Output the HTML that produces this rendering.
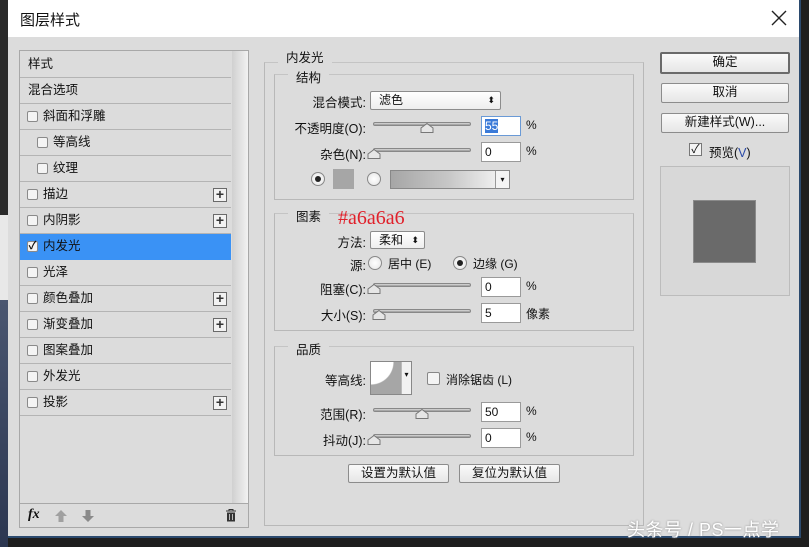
<!DOCTYPE html>
<html><head><meta charset="utf-8"><style>
*{margin:0;padding:0;box-sizing:border-box}
body{width:809px;height:547px;overflow:hidden;position:relative;background:#1e1e1e;font-family:"Liberation Sans","Noto Sans CJK SC",sans-serif;font-size:12px;color:#111}
.a{position:absolute}
#lstrip{left:0;top:0;width:8px;height:547px;background:linear-gradient(#2a2a2a 0,#2a2a2a 215px,#e8e8e8 215px,#e8e8e8 300px,#4a5670 300px,#2c3650 547px)}
#dlg{left:8px;top:0;width:793px;height:538px;background:#dcdcdc;border-right:2px solid #2b4a6e;border-bottom:2px solid #2b4a6e}
#title{left:8px;top:0;width:791px;height:37px;background:#fff;font-size:15px;padding:9px 0 0 12px}
.box{border:1px solid #a8a8a8}
.li{position:absolute;left:20px;width:211px;height:26px;border-bottom:1px solid #b4b4b4;line-height:25px;font-size:12.5px}
.cb{position:absolute;top:7px;width:11px;height:11px;border:1px solid #8a8a8a;background:#f4f4f4;border-radius:2px}
.plus{position:absolute;right:4px;top:6px;width:14px;height:14px;border:1px solid #6a6a6a;background:#f2f2f2;font-size:14px;line-height:11px;text-align:center;font-weight:bold;color:#333}
.fs{position:absolute;border:1px solid #b8b8b8;border-top-color:#c4c4c4}
.lg{position:absolute;background:#dcdcdc;padding:0 8px;font-size:12.5px}
.lbl{position:absolute;text-align:right;font-size:12.5px}
.inp{position:absolute;width:40px;height:20px;background:#fff;border:1px solid #9a9a9a;padding:2px 0 0 3px;font-size:12px}
.trk{position:absolute;height:4px;border-radius:2px;background:#a8a8a8;border:1px solid #888;box-shadow:inset 0 1px 0 #ccc}
.btn{position:absolute;background:linear-gradient(#fafafa,#e6e6e6);border:1px solid #8c8c8c;border-radius:2px;text-align:center;font-size:12.5px;line-height:16px}
.rad{position:absolute;width:14px;height:14px;border-radius:50%;border:1px solid #888;background:radial-gradient(#fff,#e4e4e4)}
.sel{position:absolute;background:linear-gradient(#fff,#eee);border:1px solid #8c8c8c;border-radius:2px;padding-left:8px;line-height:16px}
</style></head><body>
<div class="a" id="lstrip"></div>
<div class="a" id="dlg"></div>
<div class="a" id="title">图层样式</div>
<svg class="a" style="left:771px;top:10px" width="16" height="16"><path d="M1 1L15 15M15 1L1 15" stroke="#222" stroke-width="1.4"/></svg>

<!-- left panel -->
<div class="a box" style="left:19px;top:50px;width:230px;height:478px;background:#dcdcdc"></div>
<div class="a" style="left:232px;top:51px;width:16px;height:452px;background:linear-gradient(90deg,#d0d0d0,#f2f2f2)"></div>
<div class="a" style="left:20px;top:503px;width:228px;height:1px;background:#a8a8a8"></div>
<div class="li" style="top:52px;padding-left:8px">样式</div>
<div class="li" style="top:78px;padding-left:8px">混合选项</div>
<div class="li" style="top:104px;padding-left:23px"><span class="cb" style="left:7px"></span>斜面和浮雕</div>
<div class="li" style="top:130px;padding-left:33px"><span class="cb" style="left:17px"></span>等高线</div>
<div class="li" style="top:156px;padding-left:33px"><span class="cb" style="left:17px"></span>纹理</div>
<div class="li" style="top:182px;padding-left:23px"><span class="cb" style="left:7px"></span>描边<span class="plus">+</span></div>
<div class="li" style="top:208px;padding-left:23px"><span class="cb" style="left:7px"></span>内阴影<span class="plus">+</span></div>
<div class="li" style="top:234px;padding-left:23px;background:#3a92f5;border-bottom-color:#3a92f5"><span class="cb" style="left:7px;font-size:11px;line-height:9px;text-align:center;font-weight:bold">✓</span>内发光</div>
<div class="li" style="top:260px;padding-left:23px"><span class="cb" style="left:7px"></span>光泽</div>
<div class="li" style="top:286px;padding-left:23px"><span class="cb" style="left:7px"></span>颜色叠加<span class="plus">+</span></div>
<div class="li" style="top:312px;padding-left:23px"><span class="cb" style="left:7px"></span>渐变叠加<span class="plus">+</span></div>
<div class="li" style="top:338px;padding-left:23px"><span class="cb" style="left:7px"></span>图案叠加</div>
<div class="li" style="top:364px;padding-left:23px"><span class="cb" style="left:7px"></span>外发光</div>
<div class="li" style="top:390px;padding-left:23px"><span class="cb" style="left:7px"></span>投影<span class="plus">+</span></div>
<div class="a" style="left:28px;top:507px;font-family:'Liberation Serif',serif;font-style:italic;font-weight:bold;font-size:14px">fx</div>
<svg class="a" style="left:55px;top:510px" width="12" height="12"><path d="M6 0L12 6H8.5V12H3.5V6H0Z" fill="#a0a0a0"/></svg>
<svg class="a" style="left:82px;top:510px" width="12" height="12"><path d="M6 12L12 6H8.5V0H3.5V6H0Z" fill="#8a8a8a"/></svg>
<svg class="a" style="left:225px;top:509px" width="12" height="13"><path d="M1 2H11M4 2V0.5H8V2" stroke="#333" fill="none"/><path d="M2 3.5H10V12.5H2Z" fill="#333"/><path d="M4.5 5V11M7.5 5V11" stroke="#bbb"/></svg>

<!-- middle -->
<div class="fs" style="left:264px;top:62px;width:380px;height:464px"></div>
<div class="lg" style="left:278px;top:47px">内发光</div>
<div class="fs" style="left:274px;top:74px;width:360px;height:126px"></div>
<div class="lg" style="left:288px;top:67px">结构</div>
<div class="lbl" style="left:300px;top:92px;width:66px">混合模式:</div>
<div class="sel" style="left:370px;top:91px;width:131px;height:19px">滤色<span style="position:absolute;right:5px;top:0;font-size:9px">⬍</span></div>
<div class="lbl" style="left:280px;top:118px;width:86px">不透明度(O):</div>
<div class="trk" style="left:373px;top:122px;width:98px"></div>
<svg class="a" style="left:420px;top:123px" width="14" height="10"><path d="M7 .5L13 5V9.5H1V5Z" fill="#e6e6e6" stroke="#777"/></svg>
<div class="inp" style="left:481px;top:116px;border-color:#6a9ad6"><span style="background:#3a7ad8;color:#fff">55</span></div>
<div class="a" style="left:526px;top:118px">%</div>
<div class="lbl" style="left:300px;top:144px;width:66px">杂色(N):</div>
<div class="trk" style="left:373px;top:148px;width:98px"></div>
<svg class="a" style="left:367px;top:149px" width="14" height="10"><path d="M7 .5L13 5V9.5H1V5Z" fill="#e6e6e6" stroke="#777"/></svg>
<div class="inp" style="left:481px;top:142px">0</div>
<div class="a" style="left:526px;top:144px">%</div>
<div class="rad" style="left:311px;top:172px"><div style="width:6px;height:6px;border-radius:50%;background:#222;margin:3px"></div></div>
<div class="a" style="left:333px;top:169px;width:21px;height:20px;background:#a6a6a6"></div>
<div class="rad" style="left:367px;top:172px"></div>
<div class="a" style="left:390px;top:170px;width:120px;height:19px;border:1px solid #888;background:linear-gradient(90deg,#a6a6a6,#c8c8c8 50%,#f0f0f0 90%)"><div style="position:absolute;right:0;top:0;width:14px;height:17px;background:#f4f4f4;border-left:1px solid #999;font-size:8px;text-align:center;line-height:17px">▾</div></div>

<div class="fs" style="left:274px;top:213px;width:360px;height:118px"></div>
<div class="lg" style="left:288px;top:206px">图素</div>
<div class="a" style="left:338px;top:206px;color:#e0202a;font-family:'Liberation Serif',serif;font-size:20px;line-height:24px">#a6a6a6</div>
<div class="lbl" style="left:300px;top:232px;width:66px">方法:</div>
<div class="sel" style="left:370px;top:231px;width:55px;height:18px">柔和<span style="position:absolute;right:5px;top:0;font-size:9px">⬍</span></div>
<div class="lbl" style="left:300px;top:255px;width:66px">源:</div>
<div class="rad" style="left:368px;top:256px"></div>
<div class="a" style="left:388px;top:255px">居中 (E)</div>
<div class="rad" style="left:453px;top:256px"><div style="width:6px;height:6px;border-radius:50%;background:#222;margin:3px"></div></div>
<div class="a" style="left:473px;top:255px">边缘 (G)</div>
<div class="lbl" style="left:290px;top:279px;width:76px">阻塞(C):</div>
<div class="trk" style="left:373px;top:283px;width:98px"></div>
<svg class="a" style="left:367px;top:284px" width="14" height="10"><path d="M7 .5L13 5V9.5H1V5Z" fill="#e6e6e6" stroke="#777"/></svg>
<div class="inp" style="left:481px;top:277px">0</div>
<div class="a" style="left:526px;top:279px">%</div>
<div class="lbl" style="left:290px;top:305px;width:76px">大小(S):</div>
<div class="trk" style="left:373px;top:309px;width:98px"></div>
<svg class="a" style="left:372px;top:310px" width="14" height="10"><path d="M7 .5L13 5V9.5H1V5Z" fill="#e6e6e6" stroke="#777"/></svg>
<div class="inp" style="left:481px;top:303px">5</div>
<div class="a" style="left:526px;top:305px">像素</div>

<div class="fs" style="left:274px;top:346px;width:360px;height:110px"></div>
<div class="lg" style="left:288px;top:339px">品质</div>
<div class="lbl" style="left:300px;top:370px;width:66px">等高线:</div>
<div class="a" style="left:370px;top:361px;width:42px;height:34px;border:1px solid #888;background:#fff;overflow:hidden"><div style="position:absolute;left:0;top:0;width:30px;height:32px;background:radial-gradient(circle at 0 0,#fff 22px,#a6a6a6 23px)"></div><div style="position:absolute;right:0;top:0;width:10px;height:32px;background:#f2f2f2;border-left:1px solid #bbb;font-size:8px;text-align:center;line-height:26px">▾</div></div>
<div class="a" style="left:427px;top:372px;width:13px;height:13px;border:1px solid #888;background:#f4f4f4;border-radius:2px"></div>
<div class="a" style="left:446px;top:371px">消除锯齿 (L)</div>
<div class="lbl" style="left:290px;top:404px;width:76px">范围(R):</div>
<div class="trk" style="left:373px;top:408px;width:98px"></div>
<svg class="a" style="left:415px;top:409px" width="14" height="10"><path d="M7 .5L13 5V9.5H1V5Z" fill="#e6e6e6" stroke="#777"/></svg>
<div class="inp" style="left:481px;top:402px">50</div>
<div class="a" style="left:526px;top:404px">%</div>
<div class="lbl" style="left:290px;top:430px;width:76px">抖动(J):</div>
<div class="trk" style="left:373px;top:434px;width:98px"></div>
<svg class="a" style="left:367px;top:435px" width="14" height="10"><path d="M7 .5L13 5V9.5H1V5Z" fill="#e6e6e6" stroke="#777"/></svg>
<div class="inp" style="left:481px;top:428px">0</div>
<div class="a" style="left:526px;top:430px">%</div>
<div class="btn" style="left:348px;top:464px;width:101px;height:19px">设置为默认值</div>
<div class="btn" style="left:459px;top:464px;width:101px;height:19px">复位为默认值</div>

<!-- right -->
<div class="btn" style="left:660px;top:52px;width:130px;height:22px;border:2px solid #6a6a6a;line-height:16px">确定</div>
<div class="btn" style="left:661px;top:83px;width:128px;height:20px">取消</div>
<div class="btn" style="left:661px;top:113px;width:128px;height:20px">新建样式(W)...</div>
<div class="a" style="left:689px;top:143px;width:13px;height:13px;border:1px solid #777;background:#f4f4f4;font-size:12px;line-height:11px;text-align:center">✓</div>
<div class="a" style="left:709px;top:142px;font-size:12.5px">预览(<span style="color:#2a4aa8">V</span>)</div>
<div class="a" style="left:660px;top:166px;width:130px;height:130px;border:1px solid #bcbcbc;background:#d8d8d8"></div>
<div class="a" style="left:693px;top:200px;width:63px;height:63px;background:#6a6a6a;border:1px solid #8a8a8a"></div>

<div class="a" style="left:627px;top:516px;color:#fff;font-size:18px;text-shadow:0 0 2px #888;letter-spacing:0.5px">头条号 / PS一点学</div>
</body></html>
